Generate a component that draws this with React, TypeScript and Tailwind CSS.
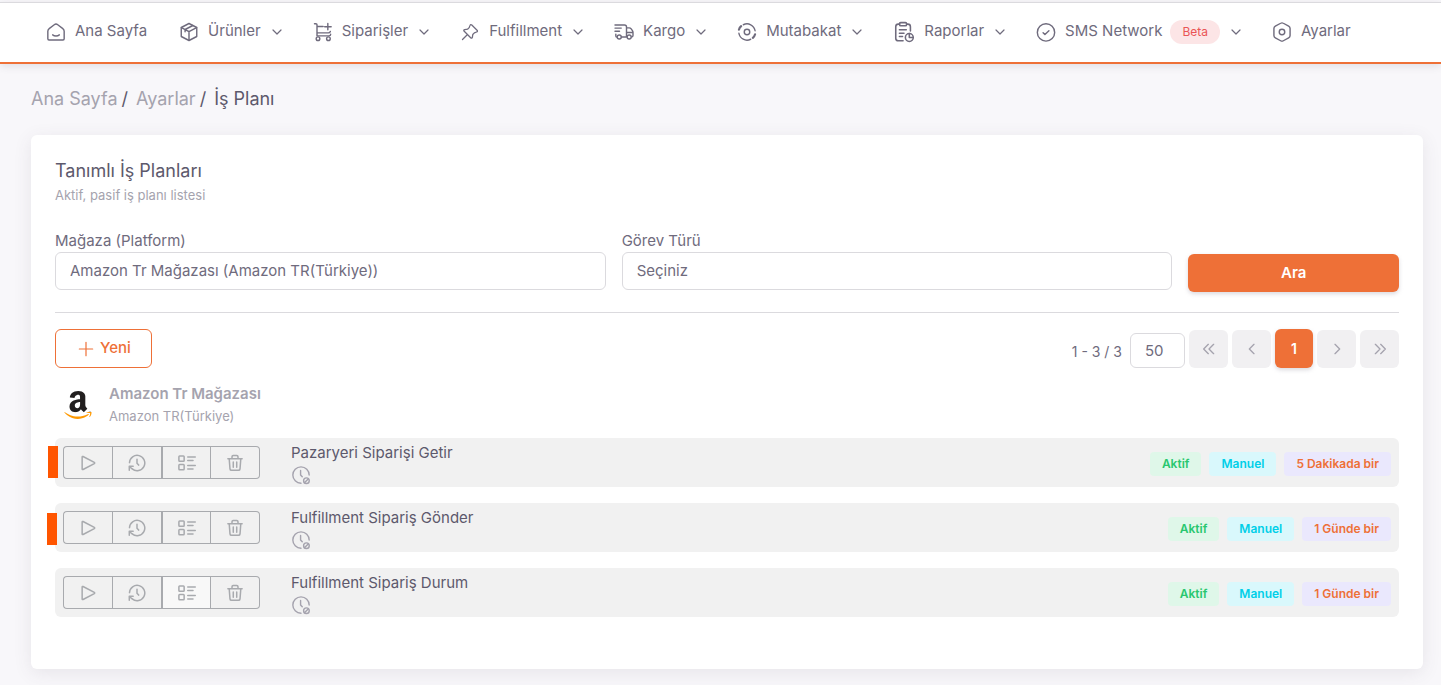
import React from "react";
import { FaAmazon } from "react-icons/fa";

type IconProps = { className?: string; weight?: number; children: React.ReactNode };

const Icon = ({ className = "size-5", weight = 1.7, children }: IconProps) => (
  <svg
    viewBox="0 0 24 24"
    fill="none"
    stroke="currentColor"
    strokeWidth={weight}
    strokeLinecap="round"
    strokeLinejoin="round"
    className={`shrink-0 ${className}`}
    aria-hidden="true"
  >
    {children}
  </svg>
);

const HomeIcon = () => (
  <Icon>
    <path d="M2.2 11.2c0-1.300.5-2.400 1.600-3.200l6.100-4.700a3.400 3.400 0 0 1 4.200 0l6.100 4.700c1.100.8 1.600 1.900 1.600 3.200v9c0 .9-.5 1.400-1.400 1.400H3.600c-.9 0-1.400-.5-1.400-1.400z" />
    <path d="M8 15.400c1 .8 2.400 1.300 4 1.300s3-.5 4-1.300" />
  </Icon>
);

const BoxIcon = () => (
  <Icon>
    <path d="M12 1.800 21.300 6.600v10.800L12 22.200l-9.300-4.800V6.600z" />
    <path d="M2.900 6.800 12 11.600l9.100-4.800M12 11.600v10.400M7.300 9 16.600 4.200M7.300 9v2.700" />
  </Icon>
);

const CartIcon = () => (
  <Icon>
    <path d="M1.800 2h1.600c.8 0 1.400.6 1.400 1.400v13.200H19c1.400 0 2.200-.6 2.200-2M4.800 5.400h7.400M4.800 13h13.400c1.300 0 2.200-.5 2.600-1.700M17.800 1.800v7.600M14 5.600h7.800" />
    <circle cx="6" cy="20" r="2.200" />
    <circle cx="18.500" cy="20" r="2.200" />
  </Icon>
);

const PinIcon = () => (
  <Icon className="mt-px h-[18px] w-5">
    <path d="m2 22 6-6M14.400 2.600l7 7c1 1 .6 2-.6 2.400l-3 1.100-2.100 2.200-.5 3.600c-.2 1.500-1.300 1.800-2.300.8l-8.600-8.600c-1-1-.7-2.100.8-2.300l3.600-.5 2.200-2.100L12 3.200c.4-1.200 1.400-1.600 2.400-.6z" />
  </Icon>
);

const TruckIcon = () => (
  <Icon>
    <path d="M1.200 3.500h11.400c1.600 0 2.400.8 2.400 2.400v12H9M15 7h3.200c1 0 1.800.4 2.400 1.200l1.500 2.200c.5.7.7 1.400.7 2.200v3.700c0 1-.6 1.600-1.600 1.600M15 12.500h7.600M1.200 7.300h7.500M1.200 11h5.400M2.200 14.500v2.400c0 .7.300 1 .9 1" />
    <circle cx="6.300" cy="18" r="2.400" />
    <circle cx="18.200" cy="18" r="2.400" />
  </Icon>
);

const SyncIcon = () => (
  <Icon>
    <circle cx="12" cy="12" r="3.300" />
    <path d="M7.600 3.300A9.800 9.800 0 0 1 21.700 10.500M16.400 20.700A9.800 9.800 0 0 1 2.300 13.500" />
    <path d="M2.300 9.200C2.800 7.400 3.700 6 5 4.900M21.700 14.800c-.5 1.800-1.400 3.200-2.700 4.300" strokeWidth="2.600" />
  </Icon>
);

const ReportIcon = () => (
  <Icon className="size-[22px]">
    <path d="M11 21.500H5.800c-1.900 0-2.800-.9-2.800-2.800V6.200c0-1.900.9-2.800 2.800-2.800h1.400M14.800 3.400h1.400c1.900 0 2.800.9 2.800 2.800v4.600" />
    <path d="M8.400 1.800h5.200c.8 0 1.200.4 1.200 1.200v1c0 .8-.4 1.200-1.200 1.200H8.400c-.8 0-1.200-.4-1.200-1.200V3c0-.8.4-1.200 1.200-1.200zM7 9.500h7.500M7 13.300h5M7 17h3.400" />
    <circle cx="17.800" cy="18" r="4.300" />
    <path d="M17.800 13.800V18h4.200" />
  </Icon>
);

const CheckIcon = () => (
  <Icon>
    <circle cx="12" cy="12.500" r="10.400" />
    <path d="m8.500 12.800 2.200 2.200 4.800-4.600" />
  </Icon>
);

const SettingsIcon = () => (
  <Icon>
    <path d="M10.400 1.500c1-.6 2.200-.6 3.200 0l6.400 3.500c1.100.6 1.700 1.500 1.700 2.800v8.400c0 1.300-.6 2.200-1.700 2.800l-6.400 3.500c-1 .6-2.200.6-3.200 0L4 19c-1.100-.6-1.700-1.500-1.700-2.800V7.800C2.300 6.500 2.900 5.600 4 5z" />
    <circle cx="12" cy="12" r="3.300" />
  </Icon>
);

const ChevronIcon = () => (
  <Icon className="size-3" weight={2.4}>
    <path d="m4 8 8 8 8-8" />
  </Icon>
);

const PlayIcon = () => (
  <Icon className="size-[18px]" weight={2}>
    <path d="M4.200 4v16c0 .6.6 1 1.200.7l15-7.900c.7-.4.7-1.200 0-1.600l-15-7.900c-.6-.3-1.200.1-1.200.7z" />
  </Icon>
);

const HistoryIcon = () => (
  <Icon className="size-[18px]" weight={2}>
    <path d="M2 11.500A10.200 10.200 0 1 1 5.600 19.800M12 7v5.200l2.200 2.600M1.700 21.600v-5.200h5.200M1.900 16.600 5.600 20" />
  </Icon>
);

const ListIcon = () => (
  <Icon className="size-[18px]" weight={2}>
    <rect x="1.200" y="2.600" width="7" height="7" rx="1" />
    <rect x="1.200" y="14" width="7" height="7" rx="1" />
    <path d="M13 4H23M13 8.600h7M13 15.400H23M13 20h7" />
  </Icon>
);

const TrashIcon = () => (
  <Icon className="size-[18px]" weight={2}>
    <path d="M2.500 6.300h19M8 6V3.600C8 2.600 8.600 2 9.600 2h4.800c1 0 1.600.6 1.600 1.600V6M4.300 6.500l1 13.300c.1 1.400.8 2 2.200 2h9c1.400 0 2.100-.6 2.200-2l1-13.300M9.700 10.500v7M14.300 10.500v7" />
  </Icon>
);

const ClockOffIcon = () => (
  <Icon>
    <path d="M21.800 12A9.800 9.800 0 1 0 12 21.800M11.500 6.500V12l2 2.200" />
    <circle cx="18.500" cy="18.800" r="3.400" />
    <path d="m16.400 20.900 4.200-4.200" />
  </Icon>
);

const menu = [
  { label: "Ana Sayfa", icon: <HomeIcon />, sub: false },
  { label: "Ürünler", icon: <BoxIcon />, sub: true },
  { label: "Siparişler", icon: <CartIcon />, sub: true },
  { label: "Fulfillment", icon: <PinIcon />, sub: true },
  { label: "Kargo", icon: <TruckIcon />, sub: true },
  { label: "Mutabakat", icon: <SyncIcon />, sub: true },
  { label: "Raporlar", icon: <ReportIcon />, sub: true },
  { label: "SMS Network", icon: <CheckIcon />, sub: true, badge: "Beta" },
  { label: "Ayarlar", icon: <SettingsIcon />, sub: false },
];

const plans = [
  { name: "Pazaryeri Siparişi Getir", period: "5 Dakikada bir", mark: "-left-[7px] top-2" },
  { name: "Fulfillment Sipariş Gönder", period: "1 Günde bir", mark: "-left-2 top-[10px]" },
  { name: "Fulfillment Sipariş Durum", period: "1 Günde bir", hovered: true },
];

const NavBar = () => (
  <header className="mt-0.5 border-t border-t-[#dbdade] border-b-2 border-b-[#ee7037] bg-white shadow-[0_2px_8px_rgba(75,70,92,0.14)]">
    <nav className="flex h-[59px] items-center gap-8 pb-0.5 pl-[46px]">
      {menu.map((item) => (
        <a key={item.label} href="#" className="flex items-center whitespace-nowrap">
          {item.icon}
          <span className="ml-[9px]">{item.label}</span>
          {item.badge && (
            <span className="ml-2 rounded-full bg-[#fce5e6] px-3 py-1 text-xs leading-4 text-[#ea5455]">
              {item.badge}
            </span>
          )}
          {item.sub && (
            <span className="-mr-0.5 ml-2.5">
              <ChevronIcon />
            </span>
          )}
        </a>
      ))}
    </nav>
  </header>
);

const Breadcrumb = () => (
  <nav className="flex text-lg leading-6 text-[#5d596c]">
    <a href="#" className="text-[#a5a3ae]">Ana Sayfa</a>
    <span className="ml-1 mr-2">/</span>
    <a href="#" className="text-[#a5a3ae]">Ayarlar</a>
    <span className="ml-1 mr-2">/</span>
    <span>İş Planı</span>
  </nav>
);

const selectClass =
  "block h-[38px] w-full appearance-none rounded-md border border-[#dbdade] bg-white px-3.5 outline-none";

const Filters = () => (
  <form className="mt-[25px] grid grid-cols-12 gap-4 border-b border-[#dbdade] pb-5">
    <div className="col-span-5">
      <label htmlFor="store" className="block leading-[22px]">Mağaza (Platform)</label>
      <select id="store" className={selectClass}>
        <option>Amazon Tr Mağazası (Amazon TR(Türkiye))</option>
      </select>
    </div>
    <div className="col-span-5">
      <label htmlFor="task" className="block leading-[22px]">Görev Türü</label>
      <select id="task" className={selectClass}>
        <option>Seçiniz</option>
      </select>
    </div>
    <button
      type="button"
      className="col-span-2 mt-6 h-[38px] rounded-md bg-[#ee7037] font-semibold text-white shadow-[0_2px_4px_rgba(165,163,174,0.4)]"
    >
      Ara
    </button>
  </form>
);

const pageClass = "flex h-[38px] w-[39px] items-center justify-center rounded-md bg-[#f1f0f2] text-[#a5a3ae]";

const Toolbar = () => (
  <div className="mt-4 flex items-end justify-between">
    <button
      type="button"
      className="flex h-[39px] items-center gap-1.5 rounded-md border border-[#ee7037] pl-[22px] pr-5 font-medium text-[#ee7037]"
    >
      <Icon className="size-4" weight={1.8}>
        <path d="M12 2v20M2 12h20" />
      </Icon>
      Yeni
    </button>
    <div className="flex items-end gap-1">
      <span className="mr-1 text-sm leading-8">1 - 3 / 3</span>
      <select
        aria-label="Sayfa boyutu"
        className="h-[35px] w-[55px] appearance-none rounded-md border border-[#dbdade] bg-white px-3.5 pt-0.5 outline-none"
      >
        <option>50</option>
      </select>
      <button type="button" aria-label="İlk" className={pageClass}>
        <Icon className="size-4" weight={2}><path d="m11 5-7 7 7 7M19 5l-7 7 7 7" /></Icon>
      </button>
      <button type="button" aria-label="Önceki" className={pageClass}>
        <Icon className="size-4" weight={2}><path d="m15 5-7 7 7 7" /></Icon>
      </button>
      <button
        type="button"
        className="h-[39px] w-[38px] rounded-md bg-[#ee7037] text-sm font-semibold text-white shadow-[0_2px_4px_rgba(165,163,174,0.4)]"
      >
        1
      </button>
      <button type="button" aria-label="Sonraki" className={pageClass}>
        <Icon className="size-4" weight={2}><path d="m9 5 7 7-7 7" /></Icon>
      </button>
      <button type="button" aria-label="Son" className={pageClass}>
        <Icon className="size-4" weight={2}><path d="m5 5 7 7-7 7M13 5l7 7-7 7" /></Icon>
      </button>
    </div>
  </div>
);

const StoreHeader = () => (
  <div className="mt-4 flex items-center pl-[9px]">
    <svg width="0" height="0" className="absolute">
      <linearGradient id="amazon" gradientUnits="userSpaceOnUse" x1="0" y1="0" x2="0" y2="512">
        <stop offset="0.72" stopColor="#221f1f" />
        <stop offset="0.72" stopColor="#ff9900" />
      </linearGradient>
    </svg>
    <FaAmazon className="h-8 w-7" style={{ fill: "url(#amazon)" }} />
    <div className="ml-[17px] text-[#a5a3ae]">
      <div className="font-semibold leading-5">Amazon Tr Mağazası</div>
      <div className="mt-0.5 text-[13px] leading-5">Amazon TR(Türkiye)</div>
    </div>
  </div>
);

const actions = [
  { label: "Çalıştır", icon: <PlayIcon />, shape: "w-[49px] rounded-l border-r-0" },
  { label: "Geçmiş", icon: <HistoryIcon />, shape: "w-[50px]" },
  { label: "Detay", icon: <ListIcon />, shape: "w-[49px]" },
  { label: "Sil", icon: <TrashIcon />, shape: "w-[49px] rounded-r border-l-0" },
];

const PlanRow = ({ plan }: { plan: (typeof plans)[number] }) => (
  <li className="relative flex h-[49px] items-center justify-between rounded-md bg-[#f1f1f1] px-2">
    {plan.mark && <span className={`absolute h-8 w-2.5 bg-[#ff5500] ${plan.mark}`} />}
    <div className="flex items-center">
      <div className="flex text-[#a8aaae]">
        {actions.map((action) => (
          <button
            key={action.label}
            type="button"
            aria-label={action.label}
            className={`flex h-[33px] items-center justify-center border border-[#a8aaae] ${action.shape} ${
              plan.hovered && action.label === "Detay" ? "bg-[#f8f8f8]" : ""
            }`}
          >
            {action.icon}
          </button>
        ))}
      </div>
      <div className="ml-[31px]">
        <div className="leading-6 text-[#5d596c]">{plan.name}</div>
        <div className="text-[#a5a3ae]">
          <ClockOffIcon />
        </div>
      </div>
    </div>
    <div className="flex gap-2 pt-0.5 text-xs font-semibold leading-4">
      <span className="rounded bg-[#dff7e9] px-3 py-1 text-[#28c76f]">Aktif</span>
      <span className="rounded bg-[#d9f8fc] px-3 py-1 text-[#00cfe8]">Manuel</span>
      <span className="rounded bg-[#eae8fd] px-3 py-1 text-[#ee7037]">{plan.period}</span>
    </div>
  </li>
);

const App = () => {
  return (
    <div className="flow-root min-h-screen bg-[#f8f7fa] font-['Inter','Liberation_Sans',sans-serif] text-[15px] text-[#6f6b7d]">
      <NavBar />
      <main className="pb-4 pl-[31px] pr-[18px] pt-[23px]">
        <Breadcrumb />
        <section className="mt-6 rounded-md bg-white px-6 pb-[52px] pt-6 shadow-[0_4px_18px_rgba(75,70,92,0.1)]">
          <h1 className="text-lg leading-6 text-[#5d596c]">Tanımlı İş Planları</h1>
          <p className="mt-0.5 text-[13px] leading-5 text-[#a5a3ae]">Aktif, pasif iş planı listesi</p>
          <Filters />
          <Toolbar />
          <StoreHeader />
          <ul className="mt-3 flex flex-col gap-4">
            {plans.map((plan) => (
              <PlanRow key={plan.name} plan={plan} />
            ))}
          </ul>
        </section>
      </main>
    </div>
  );
};

export default App;
